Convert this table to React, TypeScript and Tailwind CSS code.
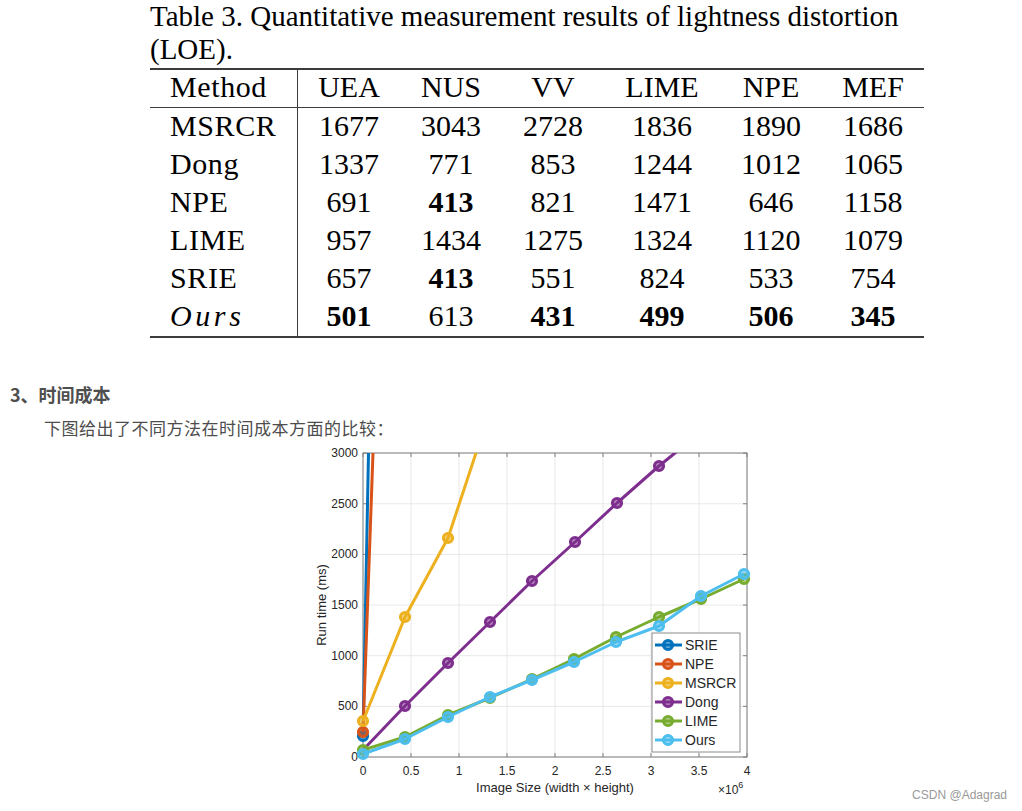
import React from "react";

const X = (v: number) => 363 + v * 96;
const Y = (v: number) => 757 - v * 0.1013;

type Series = { name: string; color: string; line: [number, number][]; marks: [number, number][] };

const series: Series[] = [
  {
    name: "SRIE",
    color: "#0072BD",
    line: [[363, 736], [368.5, 453], [369, 420]],
    marks: [[363, 736]],
  },
  {
    name: "NPE",
    color: "#D95319",
    line: [[363, 732], [373, 453], [374, 420]],
    marks: [[363, 732]],
  },
  {
    name: "MSRCR",
    color: "#EDB120",
    line: [[363, 721], [405, 617], [448, 538], [476, 453], [482, 420]],
    marks: [[363, 721], [405, 617], [448, 538]],
  },
  {
    name: "Dong",
    color: "#7E2F8E",
    line: [[363, 750], [405, 706], [448, 663], [490, 622], [532, 581], [575, 542], [617, 503], [659, 466], [675, 453], [690, 440]],
    marks: [[405, 706], [448, 663], [490, 622], [532, 581], [575, 542], [617, 503], [659, 466]],
  },
  {
    name: "LIME",
    color: "#77AC30",
    line: [[363, 750], [405, 737], [448, 715], [490, 698], [532, 679], [574, 659], [616, 637], [659, 617], [701, 599], [744, 579]],
    marks: [[363, 750], [405, 737], [448, 715], [490, 698], [532, 679], [574, 659], [616, 637], [659, 617], [701, 599], [744, 579]],
  },
  {
    name: "Ours",
    color: "#4DBEEE",
    line: [[363, 754], [405, 739], [448, 717], [490, 697], [532, 680], [574, 662], [616, 642], [659, 626], [701, 596], [744, 574]],
    marks: [[363, 754], [405, 739], [448, 717], [490, 697], [532, 680], [574, 662], [616, 642], [659, 626], [701, 596], [744, 574]],
  },
];

function Chart() {
  const xticks = [0, 0.5, 1, 1.5, 2, 2.5, 3, 3.5, 4];
  const yticks = [0, 500, 1000, 1500, 2000, 2500, 3000];
  const left = 363, right = 747, top = 453, bottom = 757;
  return (
    <svg width={470} height={370} viewBox="300 441 470 370" className="ml-[300px] shrink-0" fontFamily="'Liberation Sans', Arial, sans-serif">
      <defs>
        <clipPath id="plot">
          <rect x={350} y={top} width={410} height={320} />
        </clipPath>
      </defs>
      <rect x={left} y={top} width={right - left} height={bottom - top} fill="#fff" />
      {xticks.map((t) => (
        <line key={"gx" + t} x1={X(t)} x2={X(t)} y1={top} y2={bottom} stroke="#e8e8e8" strokeWidth={1} />
      ))}
      {yticks.map((t) => (
        <line key={"gy" + t} x1={left} x2={right} y1={Y(t)} y2={Y(t)} stroke="#e8e8e8" strokeWidth={1} />
      ))}
      <rect x={left} y={top} width={right - left} height={bottom - top} fill="none" stroke="#808080" strokeWidth={1} />
      {xticks.map((t) => (
        <g key={"tx" + t}>
          <line x1={X(t)} x2={X(t)} y1={bottom} y2={bottom - 4} stroke="#808080" />
          <line x1={X(t)} x2={X(t)} y1={top} y2={top + 4} stroke="#808080" />
          <text x={X(t)} y={775} fontSize={12} fill="#262626" textAnchor="middle">
            {t}
          </text>
        </g>
      ))}
      {yticks.map((t) => (
        <g key={"ty" + t}>
          <line x1={left} x2={left + 4} y1={Y(t)} y2={Y(t)} stroke="#808080" />
          <line x1={right} x2={right - 4} y1={Y(t)} y2={Y(t)} stroke="#808080" />
          <text x={358} y={Y(t) + 4} fontSize={12} fill="#262626" textAnchor="end">
            {t}
          </text>
        </g>
      ))}
      <g clipPath="url(#plot)">
        {series.map((s) => (
          <g key={s.name}>
            <polyline points={s.line.map((p) => p.join(",")).join(" ")} fill="none" stroke={s.color} strokeWidth={3} strokeLinejoin="round" />
            {s.marks.map((p, i) => (
              <circle key={i} cx={p[0]} cy={p[1]} r={4.5} fill={s.color} fillOpacity={0.55} stroke={s.color} strokeWidth={3.2} />
            ))}
          </g>
        ))}
      </g>
      <text x={555} y={792} fontSize={13} fill="#262626" textAnchor="middle">
        Image Size (width × height)
      </text>
      <text x={718} y={794} fontSize={12} fill="#262626">
        ×10
        <tspan fontSize={9} dy={-6}>6</tspan>
      </text>
      <text x={326} y={605} fontSize={13} fill="#262626" textAnchor="middle" transform="rotate(-90 326 605)">
        Run time (ms)
      </text>
      <rect x={652} y={633} width={88} height={119} fill="#fff" stroke="#8c8c8c" strokeWidth={1} />
      {series.map((s, i) => {
        const y = 645 + i * 19;
        return (
          <g key={"lg" + s.name}>
            <line x1={655} x2={682} y1={y} y2={y} stroke={s.color} strokeWidth={3} />
            <circle cx={668} cy={y} r={4.5} fill={s.color} fillOpacity={0.55} stroke={s.color} strokeWidth={3.2} />
            <text x={685} y={y + 5} fontSize={14} fill="#262626">
              {s.name}
            </text>
          </g>
        );
      })}
    </svg>
  );
}

const rows: { name: string; vals: (string | [string])[]; italic?: boolean }[] = [
  { name: "MSRCR", vals: ["1677", "3043", "2728", "1836", "1890", "1686"] },
  { name: "Dong", vals: ["1337", "771", "853", "1244", "1012", "1065"] },
  { name: "NPE", vals: ["691", ["413"], "821", "1471", "646", "1158"] },
  { name: "LIME", vals: ["957", "1434", "1275", "1324", "1120", "1079"] },
  { name: "SRIE", vals: ["657", ["413"], "551", "824", "533", "754"] },
  { name: "Ours", vals: [["501"], "613", ["431"], ["499"], ["506"], ["345"]], italic: true },
];

const gridCols = "grid grid-cols-[148px_102px_102px_102px_116px_102px_102px]";

export default function App() {
  return (
    <div className="w-[1022px] h-[811px] bg-white overflow-hidden">
      <div className="ml-[150px] w-[774px] text-black font-['Liberation_Serif',serif]">
        <div className="text-[29px] leading-[33px] whitespace-nowrap">
          Table 3. Quantitative measurement results of lightness distortion
          <br />
          (LOE).
        </div>
        <div className="mt-[2px] text-[30px] border-t-2 border-b-2 border-[#3c3c3c]">
          <div className={`${gridCols} h-[38px] border-b border-[#3c3c3c] leading-none`}>
            <div className="flex items-center pl-[20px] pb-[3px] border-r border-[#3c3c3c] tracking-[0.02em]">Method</div>
            {["UEA", "NUS", "VV", "LIME", "NPE", "MEF"].map((h) => (
              <div key={h} className="flex items-center justify-center pb-[3px]">
                {h}
              </div>
            ))}
          </div>
          {rows.map((r) => (
            <div key={r.name} className={`${gridCols} h-[38px] leading-none`}>
              <div className="flex items-center pl-[20px] pb-[3px] border-r border-[#3c3c3c] tracking-[0.02em]">
                {r.italic ? <span className="italic tracking-[0.12em]">{r.name}</span> : r.name}
              </div>
              {r.vals.map((v, i) => (
                <div key={i} className="flex items-center justify-center pb-[3px]">
                  {Array.isArray(v) ? <span className="font-bold">{v[0]}</span> : v}
                </div>
              ))}
            </div>
          ))}
        </div>
      </div>
      <div className="pl-[10px] font-['Noto_Sans_CJK_SC',sans-serif] text-[#4d4d4d]">
        <h3 className="mt-[43px] text-[18px] leading-[26px] font-bold text-[#4f4f4f]">3、时间成本</h3>
        <p className="mt-[8px] text-[17px] leading-[26px] indent-[34px] tracking-[0.5px]">下图给出了不同方法在时间成本方面的比较：</p>
      </div>
      <div className="flex">
        <Chart />
        <div className="ml-auto self-end mb-[9px] mr-[15px] text-[12px] leading-[14px] text-[#999] font-['Liberation_Sans',sans-serif]">
          CSDN @Adagrad
        </div>
      </div>
    </div>
  );
}
